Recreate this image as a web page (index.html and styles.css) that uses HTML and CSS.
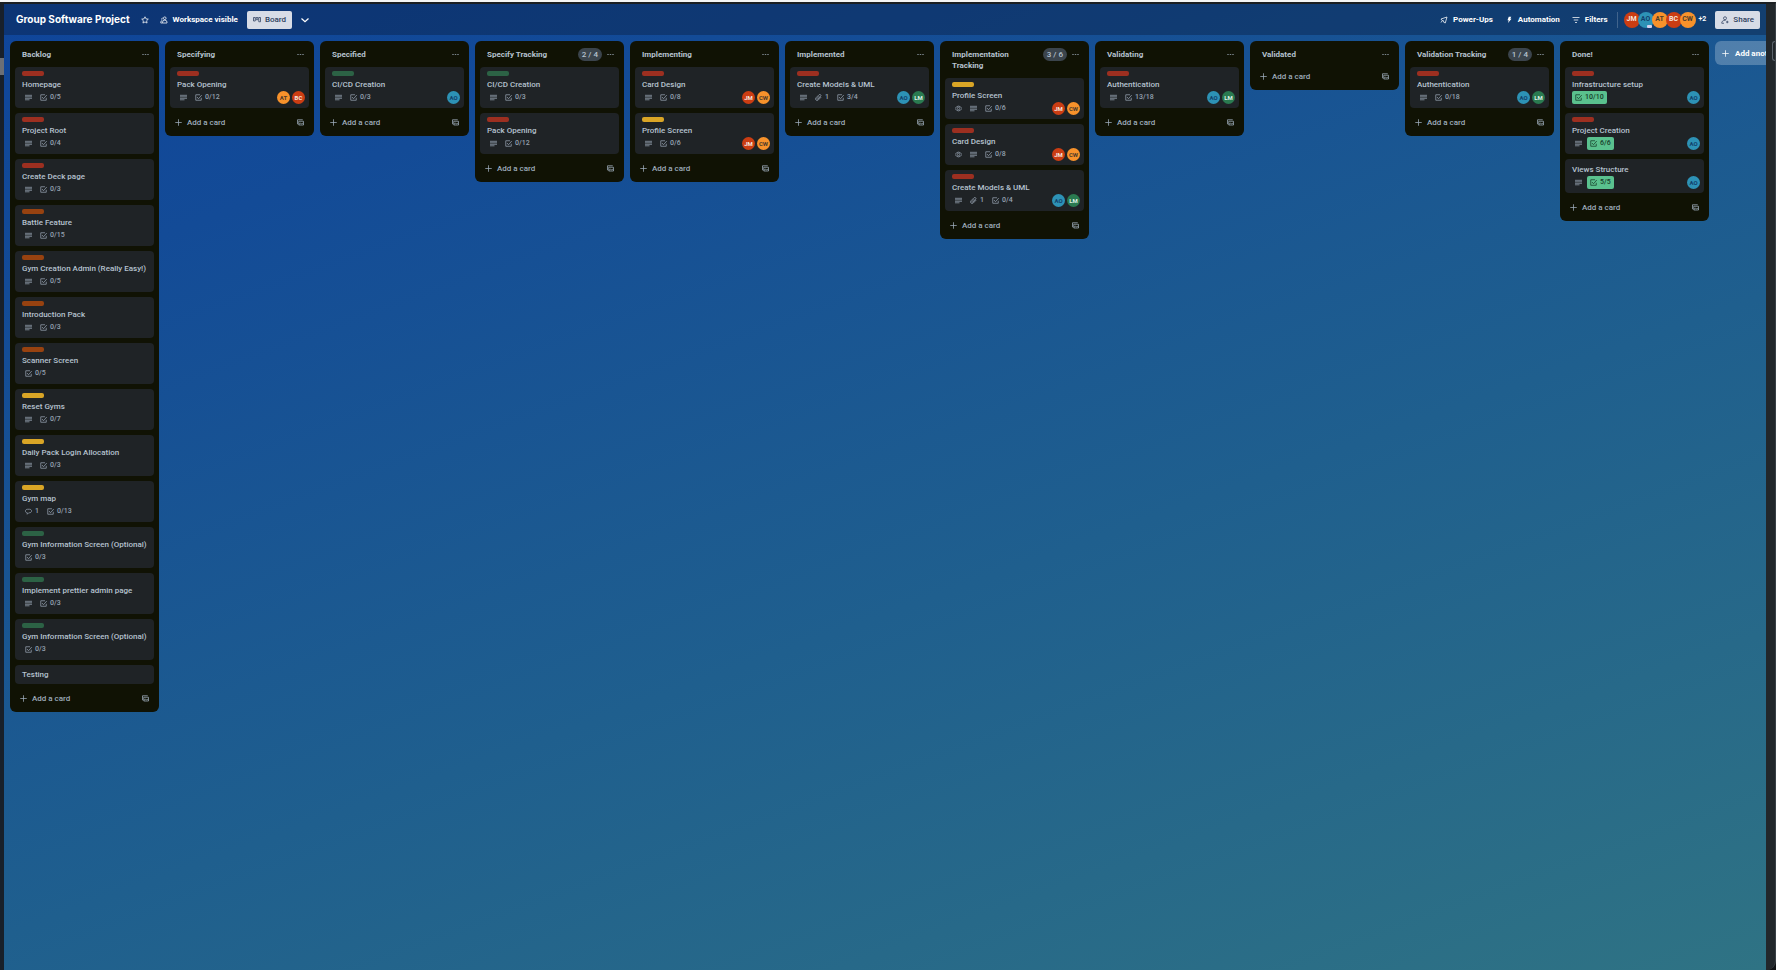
FILE: index.html
```html
<!DOCTYPE html>
<html lang="en">
<head>
<meta charset="utf-8">
<title>Group Software Project</title>
<link rel="stylesheet" href="styles.css">
</head>
<body>
<svg class="sprite" aria-hidden="true">
  <symbol id="desc" viewBox="0 0 14 14"><path d="M0 2.600h14M0 5.600h14M0 8.600h14M0 11.600h9"/></symbol>
  <symbol id="check" viewBox="0 0 14 14"><path d="M12.500 7.500v5h-11v-11H10M4 6l3 3.500L13.500 2"/></symbol>
  <symbol id="clip" viewBox="0 0 14 14"><path d="M12.500 6l-6 6a3 3 0 0 1-4.500-4.500l6-6a2.200 2.200 0 0 1 3.200 3.200L5.700 10.200a1 1 0 0 1-1.500-1.500l5-5"/></symbol>
  <symbol id="eye" viewBox="0 0 14 14"><path d="M.2 7Q3 2.200 7 2.200T13.800 7Q11 11.800 7 11.800T.2 7z"/><circle cx="7" cy="7" r="2.400"/></symbol>
  <symbol id="comment" viewBox="0 0 14 14"><path d="M4.500 9.500C1.800 9.300.8 7.800.8 6S2.500 2.500 5 2.500h4c2.500 0 4.200 1.500 4.200 3.500S11.500 9.500 9 9.500H7.500L4.500 12.500z"/></symbol>
  <symbol id="plus" viewBox="0 0 14 14"><path d="M7 .5v13M.5 7h13"/></symbol>
  <symbol id="dots" viewBox="0 0 14 14"><path d="M.5 7h3M5.500 7h3M10.500 7h3"/></symbol>
  <symbol id="template" viewBox="0 0 14 14"><path d="M1 10.500V1.500h10.500M3.500 4.500h9.500v7.500H3.500zM4 10.500l3-2.500 2 2 2-1.500 2 2"/></symbol>
  <symbol id="star" viewBox="0 0 16 16"><path d="M8 1.500l2 4.200 4.600.6-3.400 3.200.9 4.600L8 11.900l-4.100 2.200.9-4.600L1.400 6.300 6 5.700z"/></symbol>
  <symbol id="people" viewBox="0 0 16 16"><circle cx="9.500" cy="4.500" r="2.700"/><path d="M5 14v-1.500a4 4 0 0 1 4-4h1a4 4 0 0 1 4 4V14zM5.500 4A2 2 0 0 0 4 7.500M5 14H1.500v-1.500A3.500 3.500 0 0 1 4.500 9"/></symbol>
  <symbol id="board" viewBox="0 0 16 16"><path d="M1 3h3.500v7H1zM6.300 3h3.400v4.500H6.300zM11.500 3H15v8.500h-3.500z"/></symbol>
  <symbol id="chevron" viewBox="0 0 16 16"><path class="bold" d="M1 5l7 6.500L15 5"/></symbol>
  <symbol id="rocket" viewBox="0 0 16 16"><path d="M14 2L2 6l2 3 3 .5.500 3 3 1.500zM4 10l-2 3"/></symbol>
  <symbol id="bolt" viewBox="0 0 16 16"><path class="solid" d="M7.500 1.500h5l-2 4h2.500L6 14l1.500-5.500H5z"/></symbol>
  <symbol id="filter" viewBox="0 0 16 16"><path d="M1 3h14M3.500 8h9M6 13h4"/></symbol>
  <symbol id="person" viewBox="0 0 16 16"><circle cx="8" cy="4.500" r="3"/><path d="M9 9H7a5 5 0 0 0-5.500 5.500H6M12.500 9.500v5M10 12h5"/></symbol>
</svg>

<div class="window">
<div class="rail rail-left"><span class="rail-tab"></span></div>
<div class="workspace">
<header class="topbar">
  <h1 class="board-name">Group Software Project</h1>
  <button class="bar-btn star-btn" aria-label="Star board"><svg class="icon"><use href="#star"/></svg></button>
  <button class="bar-btn"><svg class="icon"><use href="#people"/></svg>Workspace visible</button>
  <button class="bar-btn light"><svg class="icon"><use href="#board"/></svg>Board</button>
  <button class="bar-btn" aria-label="More views"><svg class="icon"><use href="#chevron"/></svg></button>
  <div class="tools">
    <button class="bar-btn"><svg class="icon"><use href="#rocket"/></svg>Power-Ups</button>
    <button class="bar-btn"><svg class="icon"><use href="#bolt"/></svg>Automation</button>
    <button class="bar-btn"><svg class="icon"><use href="#filter"/></svg>Filters</button>
  </div>
  <div class="members">
    <span class="avatar red">JM</span><span class="avatar blue admin">AO</span><span class="avatar orange">AT</span><span class="avatar red">BC</span><span class="avatar orange">CW</span>
    <span class="extra">+2</span>
  </div>
  <button class="bar-btn light"><svg class="icon"><use href="#person"/></svg>Share</button>
</header>

<main class="board">
<section class="list">
  <header class="list-head"><h2>Backlog</h2><button class="icon-btn" aria-label="List actions"><svg class="icon"><use href="#dots"/></svg></button></header>
  <article class="card"><span class="label l-red"></span><h3>Homepage</h3><div class="badges"><span class="badge"><svg class="icon"><use href="#desc"/></svg></span><span class="badge"><svg class="icon"><use href="#check"/></svg>0/5</span></div></article>
  <article class="card"><span class="label l-red"></span><h3>Project Root</h3><div class="badges"><span class="badge"><svg class="icon"><use href="#desc"/></svg></span><span class="badge"><svg class="icon"><use href="#check"/></svg>0/4</span></div></article>
  <article class="card"><span class="label l-red"></span><h3>Create Deck page</h3><div class="badges"><span class="badge"><svg class="icon"><use href="#desc"/></svg></span><span class="badge"><svg class="icon"><use href="#check"/></svg>0/3</span></div></article>
  <article class="card"><span class="label l-orange"></span><h3>Battle Feature</h3><div class="badges"><span class="badge"><svg class="icon"><use href="#desc"/></svg></span><span class="badge"><svg class="icon"><use href="#check"/></svg>0/15</span></div></article>
  <article class="card"><span class="label l-orange"></span><h3>Gym Creation Admin (Really Easy!)</h3><div class="badges"><span class="badge"><svg class="icon"><use href="#desc"/></svg></span><span class="badge"><svg class="icon"><use href="#check"/></svg>0/5</span></div></article>
  <article class="card"><span class="label l-orange"></span><h3>Introduction Pack</h3><div class="badges"><span class="badge"><svg class="icon"><use href="#desc"/></svg></span><span class="badge"><svg class="icon"><use href="#check"/></svg>0/3</span></div></article>
  <article class="card"><span class="label l-orange"></span><h3>Scanner Screen</h3><div class="badges"><span class="badge"><svg class="icon"><use href="#check"/></svg>0/5</span></div></article>
  <article class="card"><span class="label l-yellow"></span><h3>Reset Gyms</h3><div class="badges"><span class="badge"><svg class="icon"><use href="#desc"/></svg></span><span class="badge"><svg class="icon"><use href="#check"/></svg>0/7</span></div></article>
  <article class="card"><span class="label l-yellow"></span><h3>Daily Pack Login Allocation</h3><div class="badges"><span class="badge"><svg class="icon"><use href="#desc"/></svg></span><span class="badge"><svg class="icon"><use href="#check"/></svg>0/3</span></div></article>
  <article class="card"><span class="label l-yellow"></span><h3>Gym map</h3><div class="badges"><span class="badge"><svg class="icon"><use href="#comment"/></svg>1</span><span class="badge"><svg class="icon"><use href="#check"/></svg>0/13</span></div></article>
  <article class="card"><span class="label l-green"></span><h3>Gym Information Screen (Optional)</h3><div class="badges"><span class="badge"><svg class="icon"><use href="#check"/></svg>0/3</span></div></article>
  <article class="card"><span class="label l-green"></span><h3>Implement prettier admin page</h3><div class="badges"><span class="badge"><svg class="icon"><use href="#desc"/></svg></span><span class="badge"><svg class="icon"><use href="#check"/></svg>0/3</span></div></article>
  <article class="card"><span class="label l-green"></span><h3>Gym Information Screen (Optional)</h3><div class="badges"><span class="badge"><svg class="icon"><use href="#check"/></svg>0/3</span></div></article>
  <article class="card"><h3>Testing</h3></article>
  <footer class="list-foot"><button class="add-card"><svg class="icon"><use href="#plus"/></svg>Add a card</button><button class="icon-btn" aria-label="Create from template"><svg class="icon"><use href="#template"/></svg></button></footer>
</section>

<section class="list">
  <header class="list-head"><h2>Specifying</h2><button class="icon-btn" aria-label="List actions"><svg class="icon"><use href="#dots"/></svg></button></header>
  <article class="card"><span class="label l-red"></span><h3>Pack Opening</h3><div class="badges"><span class="badge"><svg class="icon"><use href="#desc"/></svg></span><span class="badge"><svg class="icon"><use href="#check"/></svg>0/12</span><span class="people"><span class="avatar orange">AT</span><span class="avatar red">BC</span></span></div></article>
  <footer class="list-foot"><button class="add-card"><svg class="icon"><use href="#plus"/></svg>Add a card</button><button class="icon-btn" aria-label="Create from template"><svg class="icon"><use href="#template"/></svg></button></footer>
</section>

<section class="list">
  <header class="list-head"><h2>Specified</h2><button class="icon-btn" aria-label="List actions"><svg class="icon"><use href="#dots"/></svg></button></header>
  <article class="card"><span class="label l-green"></span><h3>CI/CD Creation</h3><div class="badges"><span class="badge"><svg class="icon"><use href="#desc"/></svg></span><span class="badge"><svg class="icon"><use href="#check"/></svg>0/3</span><span class="people"><span class="avatar blue">AO</span></span></div></article>
  <footer class="list-foot"><button class="add-card"><svg class="icon"><use href="#plus"/></svg>Add a card</button><button class="icon-btn" aria-label="Create from template"><svg class="icon"><use href="#template"/></svg></button></footer>
</section>

<section class="list">
  <header class="list-head"><h2>Specify Tracking</h2><span class="count">2 / 4</span><button class="icon-btn" aria-label="List actions"><svg class="icon"><use href="#dots"/></svg></button></header>
  <article class="card"><span class="label l-green"></span><h3>CI/CD Creation</h3><div class="badges"><span class="badge"><svg class="icon"><use href="#desc"/></svg></span><span class="badge"><svg class="icon"><use href="#check"/></svg>0/3</span></div></article>
  <article class="card"><span class="label l-red"></span><h3>Pack Opening</h3><div class="badges"><span class="badge"><svg class="icon"><use href="#desc"/></svg></span><span class="badge"><svg class="icon"><use href="#check"/></svg>0/12</span></div></article>
  <footer class="list-foot"><button class="add-card"><svg class="icon"><use href="#plus"/></svg>Add a card</button><button class="icon-btn" aria-label="Create from template"><svg class="icon"><use href="#template"/></svg></button></footer>
</section>

<section class="list">
  <header class="list-head"><h2>Implementing</h2><button class="icon-btn" aria-label="List actions"><svg class="icon"><use href="#dots"/></svg></button></header>
  <article class="card"><span class="label l-red"></span><h3>Card Design</h3><div class="badges"><span class="badge"><svg class="icon"><use href="#desc"/></svg></span><span class="badge"><svg class="icon"><use href="#check"/></svg>0/8</span><span class="people"><span class="avatar red">JM</span><span class="avatar orange">CW</span></span></div></article>
  <article class="card"><span class="label l-yellow"></span><h3>Profile Screen</h3><div class="badges"><span class="badge"><svg class="icon"><use href="#desc"/></svg></span><span class="badge"><svg class="icon"><use href="#check"/></svg>0/6</span><span class="people"><span class="avatar red">JM</span><span class="avatar orange">CW</span></span></div></article>
  <footer class="list-foot"><button class="add-card"><svg class="icon"><use href="#plus"/></svg>Add a card</button><button class="icon-btn" aria-label="Create from template"><svg class="icon"><use href="#template"/></svg></button></footer>
</section>

<section class="list">
  <header class="list-head"><h2>Implemented</h2><button class="icon-btn" aria-label="List actions"><svg class="icon"><use href="#dots"/></svg></button></header>
  <article class="card"><span class="label l-red"></span><h3>Create Models &amp; UML</h3><div class="badges"><span class="badge"><svg class="icon"><use href="#desc"/></svg></span><span class="badge"><svg class="icon"><use href="#clip"/></svg>1</span><span class="badge"><svg class="icon"><use href="#check"/></svg>3/4</span><span class="people"><span class="avatar blue">AO</span><span class="avatar green">LM</span></span></div></article>
  <footer class="list-foot"><button class="add-card"><svg class="icon"><use href="#plus"/></svg>Add a card</button><button class="icon-btn" aria-label="Create from template"><svg class="icon"><use href="#template"/></svg></button></footer>
</section>

<section class="list">
  <header class="list-head"><h2>Implementation<br>Tracking</h2><span class="count">3 / 6</span><button class="icon-btn" aria-label="List actions"><svg class="icon"><use href="#dots"/></svg></button></header>
  <article class="card"><span class="label l-yellow"></span><h3>Profile Screen</h3><div class="badges"><span class="badge"><svg class="icon"><use href="#eye"/></svg></span><span class="badge"><svg class="icon"><use href="#desc"/></svg></span><span class="badge"><svg class="icon"><use href="#check"/></svg>0/6</span><span class="people"><span class="avatar red">JM</span><span class="avatar orange">CW</span></span></div></article>
  <article class="card"><span class="label l-red"></span><h3>Card Design</h3><div class="badges"><span class="badge"><svg class="icon"><use href="#eye"/></svg></span><span class="badge"><svg class="icon"><use href="#desc"/></svg></span><span class="badge"><svg class="icon"><use href="#check"/></svg>0/8</span><span class="people"><span class="avatar red">JM</span><span class="avatar orange">CW</span></span></div></article>
  <article class="card"><span class="label l-red"></span><h3>Create Models &amp; UML</h3><div class="badges"><span class="badge"><svg class="icon"><use href="#desc"/></svg></span><span class="badge"><svg class="icon"><use href="#clip"/></svg>1</span><span class="badge"><svg class="icon"><use href="#check"/></svg>0/4</span><span class="people"><span class="avatar blue">AO</span><span class="avatar green">LM</span></span></div></article>
  <footer class="list-foot"><button class="add-card"><svg class="icon"><use href="#plus"/></svg>Add a card</button><button class="icon-btn" aria-label="Create from template"><svg class="icon"><use href="#template"/></svg></button></footer>
</section>

<section class="list">
  <header class="list-head"><h2>Validating</h2><button class="icon-btn" aria-label="List actions"><svg class="icon"><use href="#dots"/></svg></button></header>
  <article class="card"><span class="label l-red"></span><h3>Authentication</h3><div class="badges"><span class="badge"><svg class="icon"><use href="#desc"/></svg></span><span class="badge"><svg class="icon"><use href="#check"/></svg>13/18</span><span class="people"><span class="avatar blue">AO</span><span class="avatar green">LM</span></span></div></article>
  <footer class="list-foot"><button class="add-card"><svg class="icon"><use href="#plus"/></svg>Add a card</button><button class="icon-btn" aria-label="Create from template"><svg class="icon"><use href="#template"/></svg></button></footer>
</section>

<section class="list">
  <header class="list-head"><h2>Validated</h2><button class="icon-btn" aria-label="List actions"><svg class="icon"><use href="#dots"/></svg></button></header>
  <footer class="list-foot"><button class="add-card"><svg class="icon"><use href="#plus"/></svg>Add a card</button><button class="icon-btn" aria-label="Create from template"><svg class="icon"><use href="#template"/></svg></button></footer>
</section>

<section class="list">
  <header class="list-head"><h2>Validation Tracking</h2><span class="count">1 / 4</span><button class="icon-btn" aria-label="List actions"><svg class="icon"><use href="#dots"/></svg></button></header>
  <article class="card"><span class="label l-red"></span><h3>Authentication</h3><div class="badges"><span class="badge"><svg class="icon"><use href="#desc"/></svg></span><span class="badge"><svg class="icon"><use href="#check"/></svg>0/18</span><span class="people"><span class="avatar blue">AO</span><span class="avatar green">LM</span></span></div></article>
  <footer class="list-foot"><button class="add-card"><svg class="icon"><use href="#plus"/></svg>Add a card</button><button class="icon-btn" aria-label="Create from template"><svg class="icon"><use href="#template"/></svg></button></footer>
</section>

<section class="list">
  <header class="list-head"><h2>Done!</h2><button class="icon-btn" aria-label="List actions"><svg class="icon"><use href="#dots"/></svg></button></header>
  <article class="card"><span class="label l-red"></span><h3>Infrastructure setup</h3><div class="badges"><span class="badge done"><svg class="icon"><use href="#check"/></svg>10/10</span><span class="people"><span class="avatar blue">AO</span></span></div></article>
  <article class="card"><span class="label l-red"></span><h3>Project Creation</h3><div class="badges"><span class="badge"><svg class="icon"><use href="#desc"/></svg></span><span class="badge done"><svg class="icon"><use href="#check"/></svg>6/6</span><span class="people"><span class="avatar blue">AO</span></span></div></article>
  <article class="card"><h3>Views Structure</h3><div class="badges"><span class="badge"><svg class="icon"><use href="#desc"/></svg></span><span class="badge done"><svg class="icon"><use href="#check"/></svg>5/5</span><span class="people"><span class="avatar blue">AO</span></span></div></article>
  <footer class="list-foot"><button class="add-card"><svg class="icon"><use href="#plus"/></svg>Add a card</button><button class="icon-btn" aria-label="Create from template"><svg class="icon"><use href="#template"/></svg></button></footer>
</section>

<button class="add-list"><svg class="icon"><use href="#plus"/></svg>Add another list</button>
</main>
</div>
<div class="rail rail-right"><span class="rail-tab"></span></div>
</div>
</body>
</html>
```
FILE: styles.css
```css
* { box-sizing: border-box; }

body {
  margin: 0;
  background: #101214;
  color: #b6c2cf;
  font: 500 8px/11px Roboto, "Liberation Sans", sans-serif;
}

h1, h2, h3 { margin: 0; font-size: inherit; }

button {
  border: 0;
  padding: 0;
  background: none;
  color: inherit;
  font: inherit;
  white-space: nowrap;
  cursor: pointer;
}

.sprite { position: absolute; width: 0; height: 0; }

.icon {
  flex: none;
  width: 7px;
  height: 7px;
  fill: none;
  stroke: currentColor;
  stroke-width: 1.5;
}

.solid { fill: currentColor; stroke: none; }
.bold { stroke-width: 2.5; }

/* Window frame */
.window {
  display: flex;
  height: 100vh;
  border-top: 2px solid #f4f5f5;
  overflow: hidden;
}

.rail { flex: none; border-top: 2px solid #1b1f22; }
.rail-left { width: 4px; padding-top: 54px; background: #18202a; }
.rail-left .rail-tab { display: block; height: 17px; background: #6b6f76; }

.rail-right {
  width: 10px;
  padding: 37px 0 0 6px;
  background: #22272b;
  border-right: 1px solid #3a4046;
  border-bottom-right-radius: 9px;
}

.rail-right .rail-tab {
  display: block;
  height: 20px;
  border: 1px solid #5b636b;
  border-right: 0;
  border-radius: 3px 0 0 3px;
}

.workspace {
  flex: 1;
  min-width: 0;
  display: flex;
  flex-direction: column;
  border-top: 2px solid #1b1f22;
  background: linear-gradient(160deg, #0f459a 0%, #134b97 18%, #1f5f8e 58%, #2f7384 100%);
}

/* Board header */
.topbar {
  display: flex;
  align-items: center;
  gap: 9px;
  height: 31px;
  padding: 0 6px 0 12px;
  background: rgba(9, 30, 66, 0.42);
  color: #fff;
  font-weight: 700;
}

.topbar .icon { width: 8px; height: 8px; }
.board-name { font-family: Inter, "Liberation Sans", sans-serif; font-size: 10px; font-weight: 700; white-space: nowrap; }
.bar-btn { display: flex; align-items: center; gap: 5px; }
.bar-btn.star-btn { padding: 0 2px; }

.bar-btn.light {
  gap: 4px;
  height: 18px;
  padding: 0 6px;
  border-radius: 2px;
  background: #d7dce6;
  color: #2c3e5d;
  font-weight: 500;
}

.tools { display: flex; gap: 12px; margin-left: auto; }

.members {
  display: flex;
  align-items: center;
  padding-left: 6px;
  border-left: 1px solid rgba(255, 255, 255, 0.2);
}

.members .avatar { width: 16px; height: 16px; margin-right: -2px; font-size: 7px; }
.members .extra { padding-left: 5px; font-size: 7px; }

.avatar {
  position: relative;
  display: flex;
  align-items: center;
  justify-content: center;
  width: 13px;
  height: 13px;
  border-radius: 50%;
  font-size: 6px;
  font-weight: 700;
}

.red { background: #cb3d13; color: #f4e4df; }
.blue { background: #2d92b6; color: #123f6b; }
.orange { background: #f7922b; color: #4c3b2c; }
.green { background: #2a7a50; color: #dcefe4; }

.admin::after {
  content: "";
  position: absolute;
  right: 2px;
  bottom: 0;
  width: 5px;
  height: 3px;
  border-radius: 1px;
  background: #d5d3f0;
}

/* Lists */
.board {
  flex: 1;
  display: flex;
  align-items: flex-start;
  gap: 6px;
  padding: 6px 0 0 6px;
  overflow: hidden;
}

.list {
  flex: none;
  display: flex;
  flex-direction: column;
  gap: 5px;
  width: 149px;
  padding: 8px 5px 4px;
  border-radius: 6px;
  background: #101204;
}

.list-head {
  display: flex;
  align-items: flex-start;
  gap: 5px;
  padding: 0 5px 2px 7px;
}

.list-head h2 { flex: 1; font-weight: 700; }
.icon-btn { display: flex; align-items: center; height: 11px; color: #9fadbc; }

.count {
  margin: -1px 0;
  padding: 1px 4px;
  border-radius: 7px;
  background: #3b444c;
}

.card {
  display: flex;
  flex-direction: column;
  align-items: flex-start;
  gap: 1px;
  padding: 4px 4px 4px 7px;
  border-radius: 4px;
  background: #1f2326;
}

.card h3 { font-weight: 500; }
.card h3:first-child:not(:last-child) { padding-top: 1px; }
.label { width: 22px; height: 5px; margin-bottom: 2px; border-radius: 2px; }
.l-red { background: #9c2f20; }
.l-orange { background: #974210; }
.l-yellow { background: #d9a526; }
.l-green { background: #2c6245; }

.badges {
  display: flex;
  align-items: center;
  align-self: stretch;
  gap: 2px;
  color: #95a2b0;
  font-size: 7px;
}

.badge {
  display: flex;
  align-items: center;
  gap: 3px;
  height: 13px;
  padding: 0 3px;
  border-radius: 2px;
}

.badge.done { background: #5ac18e; color: #173c2a; }
.people { display: flex; gap: 2px; margin-left: auto; }

.list-foot {
  display: flex;
  align-items: center;
  height: 19px;
  padding: 0 5px;
  color: #9fadbc;
}

.add-card { display: flex; flex: 1; align-items: center; gap: 5px; }

.add-list {
  flex: none;
  display: flex;
  align-items: center;
  gap: 6px;
  width: 149px;
  height: 24px;
  padding: 0 7px;
  border-radius: 6px;
  background: rgba(255, 255, 255, 0.24);
  color: #fff;
  font-weight: 700;
}
```
